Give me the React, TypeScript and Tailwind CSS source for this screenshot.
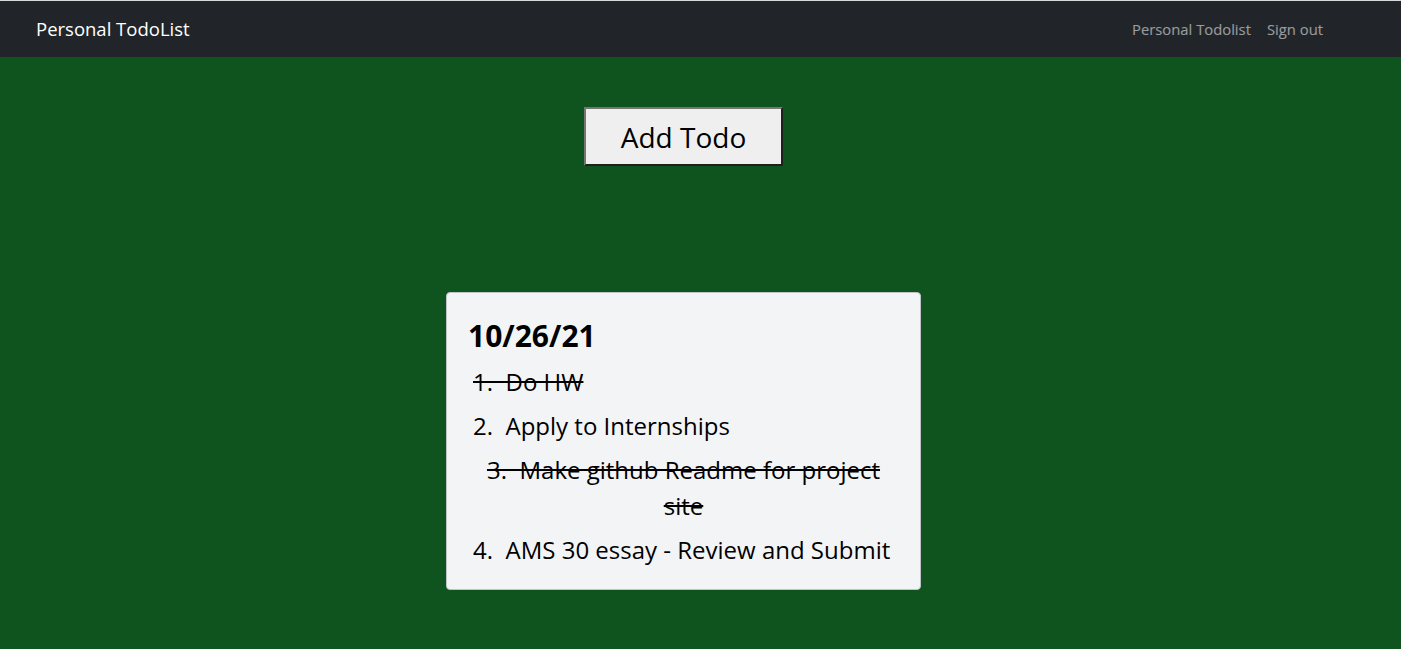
const todos = [
  { text: "Do HW", done: true, center: false },
  { text: "Apply to Internships", done: false, center: false },
  { text: "Make github Readme for project site", done: true, center: true },
  { text: "AMS 30 essay - Review and Submit", done: false, center: false },
];

export default function App() {
  return (
    <div className="min-h-[649px] bg-[#0f531f] font-['Open_Sans',sans-serif]">
      <nav className="flex h-[57px] items-center justify-between border-t border-[#d9d9d9] bg-[#212529] pl-9 pr-[78px]">
        <span className="text-[18.5px] text-white">Personal TodoList</span>
        <div className="flex gap-4 text-[14.8px] text-white/55">
          <span>Personal Todolist</span>
          <span>Sign out</span>
        </div>
      </nav>

      {/* centred column sits left of a 34px gutter, like the original */}
      <div className="flex flex-col items-center pr-[34px]">
        <button className="mt-[50px] h-[59px] w-[199px] border-2 border-t-[#767676] border-l-[#767676] border-r-[#1f1f1f] border-b-[#1f1f1f] bg-[#efefef] text-[28px] text-black">
          Add Todo
        </button>

        <div className="mt-[126px] w-[475px] rounded border border-[#bfc3c7] bg-[#f3f4f6] px-[21px] pb-[13px] pt-[25px]">
          <h2 className="text-[30px] font-bold leading-[36px] text-black">10/26/21</h2>
          <ol className="mt-[10px]">
            {todos.map((t, i) => (
              <li
                key={i}
                className={
                  "mb-2 text-[24px] leading-[36px] text-black " +
                  (t.done ? "line-through " : "") +
                  (t.center ? "px-[12px] text-center" : "pl-[5px]")
                }
              >
                {`${i + 1}.\u00a0 ${t.text}`}
              </li>
            ))}
          </ol>
        </div>
      </div>
    </div>
  );
}
